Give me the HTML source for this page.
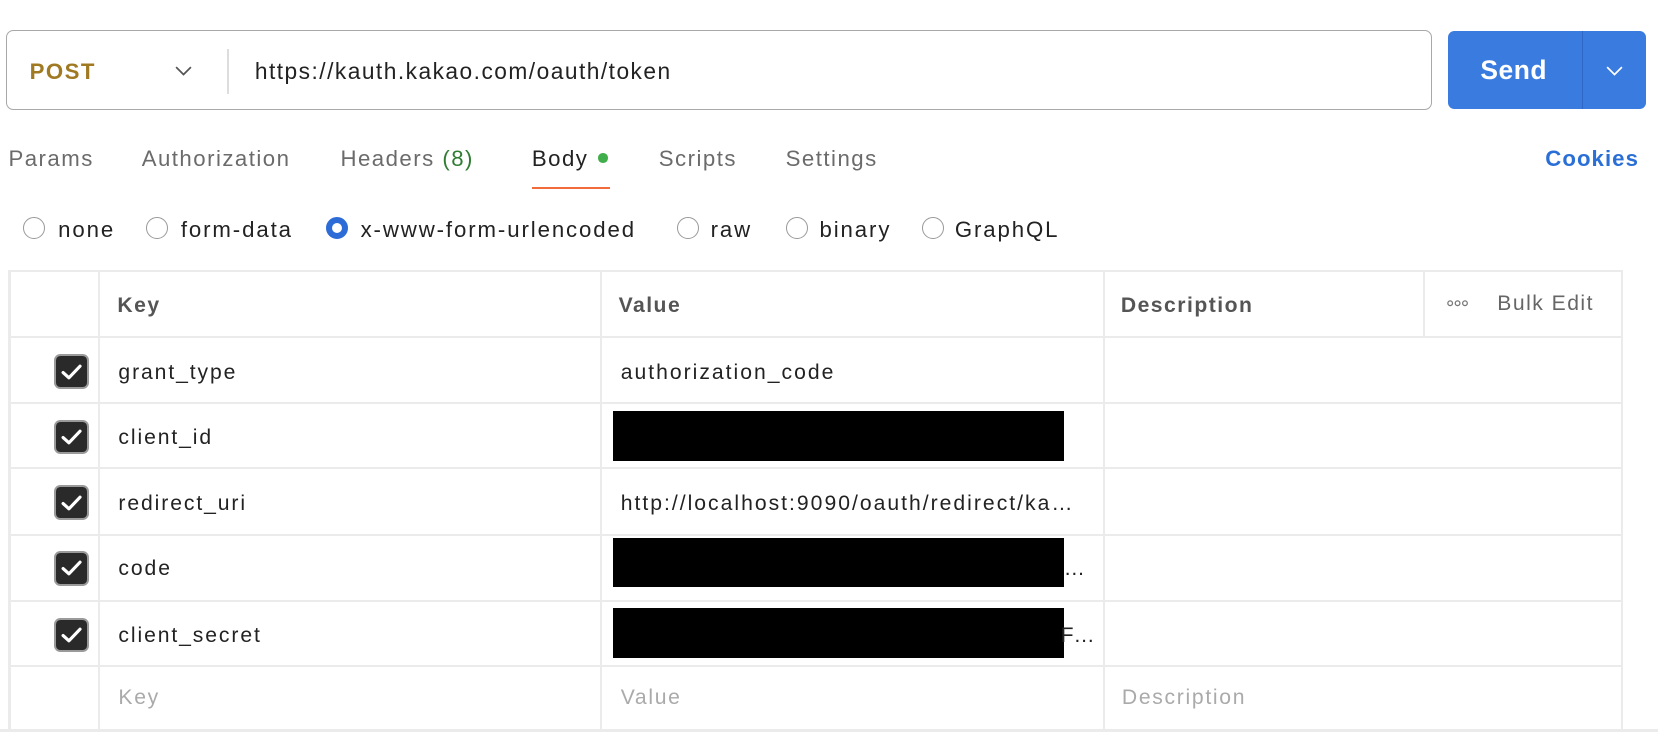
<!DOCTYPE html>
<html><head><style>
html,body{margin:0;padding:0;background:#fff;overflow:hidden}
body{width:1658px;height:740px}
#w{position:relative;width:1568px;height:700px;zoom:1.05740;font-family:"Liberation Sans",sans-serif;color:#222;letter-spacing:1.4px}
.a{position:absolute;white-space:nowrap}
.tab{top:138px;font-size:21px;color:#6b6b6b}
.rad{top:205px;width:19px;height:19px;border:1.5px solid #999;border-radius:50%}
.rt{top:205px;font-size:21px;color:#222;letter-spacing:1.8px}
.hl{position:absolute;left:8px;width:1527px;height:2px;background:#ebebeb}
.vl{position:absolute;width:2px;background:#ebebeb}
.cb{position:absolute;left:51px;background:#2a2a2a;border:2px solid #9a9a9a;border-radius:6px;box-sizing:content-box;width:29px;height:29px}
.cb svg{position:absolute;left:5px;top:6px}
.k{position:absolute;left:112px;font-size:20px;color:#222;letter-spacing:1.8px}
.v{position:absolute;left:587px;font-size:20px;color:#222;letter-spacing:1.9px}
.bx{position:absolute;left:580px;width:426px;background:#000}
.ph{font-size:20px;color:#aaa;position:absolute;top:649px;letter-spacing:1.6px}
</style></head><body><div id="w">
<div class="a" style="left:6px;top:28px;width:1346px;height:74px;border:1.5px solid #a8a8a8;border-radius:7px"></div>
<div class="a" style="left:28px;top:56px;font-size:21px;font-weight:bold;color:#a07a22">POST</div>
<svg class="a" style="left:165px;top:61px" width="18" height="12"><path d="M2 2 L9 9 L16 2" stroke="#555" stroke-width="1.6" fill="none"/></svg>
<div class="a" style="left:215px;top:46px;width:1.5px;height:43px;background:#ddd"></div>
<div class="a" style="left:241px;top:55px;font-size:21.5px;color:#222">https://kauth.kakao.com/oauth/token</div>
<div class="a" style="left:1369px;top:29px;width:188px;height:74px;background:#3a7be0;border-radius:6px"></div>
<div class="a" style="left:1496px;top:29px;width:1.5px;height:74px;background:#2f68c4"></div>
<div class="a" style="left:1400px;top:52px;font-size:25px;font-weight:bold;color:#fff;letter-spacing:0.5px">Send</div>
<svg class="a" style="left:1518px;top:61px" width="18" height="12"><path d="M2 2 L9 9 L16 2" stroke="#fff" stroke-width="1.6" fill="none"/></svg>

<div class="a tab" style="left:8px">Params</div>
<div class="a tab" style="left:134px">Authorization</div>
<div class="a tab" style="left:322px">Headers <span style="color:#2f7d33">(8)</span></div>
<div class="a tab" style="left:503px;color:#222">Body</div>
<div class="a" style="left:566px;top:145px;width:9px;height:9px;border-radius:50%;background:#3fae4b"></div>
<div class="a" style="left:503px;top:177px;width:74px;height:2px;background:#f26b3a"></div>
<div class="a tab" style="left:623px">Scripts</div>
<div class="a tab" style="left:743px">Settings</div>
<div class="a" style="right:18px;top:138px;font-size:21px;font-weight:bold;color:#2a6fd6;letter-spacing:1px">Cookies</div>

<div class="a rad" style="left:22px"></div><div class="a rt" style="left:55px">none</div>
<div class="a rad" style="left:138px"></div><div class="a rt" style="left:171px">form-data</div>
<div class="a rad" style="left:308px;border:6px solid #2d6bd6;width:10px;height:10px"></div><div class="a rt" style="left:341px">x-www-form-urlencoded</div>
<div class="a rad" style="left:640px"></div><div class="a rt" style="left:672px">raw</div>
<div class="a rad" style="left:743px"></div><div class="a rt" style="left:775px">binary</div>
<div class="a rad" style="left:872px"></div><div class="a rt" style="left:903px">GraphQL</div>

<div class="hl" style="top:255px"></div>
<div class="hl" style="top:318px"></div>
<div class="hl" style="top:380px"></div>
<div class="hl" style="top:442px"></div>
<div class="hl" style="top:505px"></div>
<div class="hl" style="top:567px"></div>
<div class="hl" style="top:629px"></div>
<div class="hl" style="top:689px;left:0;width:1568px;height:3px"></div>
<div class="vl" style="left:8px;top:255px;height:435px"></div>
<div class="vl" style="left:93px;top:255px;height:435px"></div>
<div class="vl" style="left:567px;top:255px;height:435px"></div>
<div class="vl" style="left:1043px;top:255px;height:435px"></div>
<div class="vl" style="left:1346px;top:255px;height:64px"></div>
<div class="vl" style="left:1533px;top:255px;height:435px"></div>

<div class="a" style="left:111px;top:278px;font-size:20px;font-weight:bold;color:#555">Key</div>
<div class="a" style="left:585px;top:278px;font-size:20px;font-weight:bold;color:#555">Value</div>
<div class="a" style="left:1060px;top:278px;font-size:20px;font-weight:bold;color:#555">Description</div>
<svg class="a" style="left:1368px;top:283px" width="20" height="8"><circle cx="3" cy="4" r="2.2" fill="none" stroke="#777" stroke-width="1.2"/><circle cx="10" cy="4" r="2.2" fill="none" stroke="#777" stroke-width="1.2"/><circle cx="17" cy="4" r="2.2" fill="none" stroke="#777" stroke-width="1.2"/></svg>
<div class="a" style="left:1416px;top:276px;font-size:20px;color:#666">Bulk Edit</div>

<div class="cb" style="top:335px"><svg width="20" height="18"><path d="M2 9 L7.5 14 L18 3" stroke="#fff" stroke-width="3" fill="none" stroke-linecap="round" stroke-linejoin="round"/></svg></div>
<div class="cb" style="top:397px"><svg width="20" height="18"><path d="M2 9 L7.5 14 L18 3" stroke="#fff" stroke-width="3" fill="none" stroke-linecap="round" stroke-linejoin="round"/></svg></div>
<div class="cb" style="top:459px"><svg width="20" height="18"><path d="M2 9 L7.5 14 L18 3" stroke="#fff" stroke-width="3" fill="none" stroke-linecap="round" stroke-linejoin="round"/></svg></div>
<div class="cb" style="top:521px"><svg width="20" height="18"><path d="M2 9 L7.5 14 L18 3" stroke="#fff" stroke-width="3" fill="none" stroke-linecap="round" stroke-linejoin="round"/></svg></div>
<div class="cb" style="top:584px"><svg width="20" height="18"><path d="M2 9 L7.5 14 L18 3" stroke="#fff" stroke-width="3" fill="none" stroke-linecap="round" stroke-linejoin="round"/></svg></div>

<div class="k" style="top:341px">grant_type</div>
<div class="k" style="top:403px">client_id</div>
<div class="k" style="top:465px">redirect_uri</div>
<div class="k" style="top:527px">code</div>
<div class="k" style="top:590px">client_secret</div>

<div class="v" style="top:341px">authorization_code</div>
<div class="bx" style="top:389px;height:47px"></div>
<div class="v" style="top:465px">http://localhost:9090/oauth/redirect/ka…</div>
<div class="bx" style="top:509px;height:46px"></div>
<div class="a" style="left:1006px;top:527px;font-size:20px;letter-spacing:0">…</div>
<div class="bx" style="top:575px;height:47px"></div>
<div class="a" style="left:1003px;top:590px;font-size:20px;letter-spacing:0">F…</div>

<div class="ph" style="left:112px">Key</div>
<div class="ph" style="left:587px">Value</div>
<div class="ph" style="left:1061px">Description</div>
</div></body></html>
